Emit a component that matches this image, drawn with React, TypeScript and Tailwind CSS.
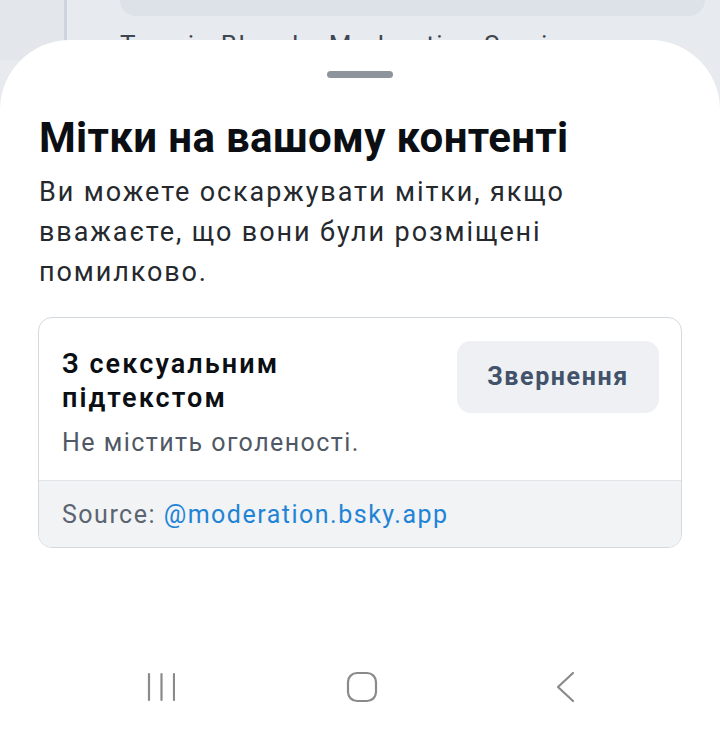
export default function App() {
  return (
    <div
      className="relative h-[730px] w-[720px] overflow-hidden bg-[#e7eaef]"
      style={{ fontFamily: "Roboto, 'Noto Sans', sans-serif" }}
    >
      {/* page behind the sheet */}
      <div className="flex h-[60px]">
        <div className="w-[64px] bg-[#e3e7ec]" />
        <div className="w-[3px] bg-[#cdd4dd]" />
        <div className="flex-1 pl-[53px] pr-[15px]">
          <div className="h-[16px] rounded-b-[16px] bg-[#dde1e8]" />
          <div className="mt-[14px] text-[26px] leading-[30px] tracking-[1.5px] text-[#3f4650]">
            Тег від Bluesky Moderation Service
          </div>
        </div>
      </div>

      {/* bottom sheet */}
      <div className="absolute inset-x-0 top-[40px] bottom-0 flex flex-col rounded-t-[70px] bg-white">
        <div className="mx-auto mt-[31px] h-[7px] w-[66px] rounded-full bg-[#8e949c]" />

        <div className="px-[39px] pt-[35px]">
          <h1 className="text-[42px] font-bold leading-[50px] tracking-[0.35px] text-[#0b0f14]">
            Мітки на вашому контенті
          </h1>
          <p className="mt-[9px] text-[27px] leading-[40px] tracking-[1.9px] text-[#25292e]">
            Ви можете оскаржувати мітки, якщо вважаєте, що вони були розміщені помилково.
          </p>
        </div>

        <div className="mx-[38px] mt-[25px] overflow-hidden rounded-[14px] border border-[#d4d9e0]">
          <div className="flex items-start gap-[24px] pt-[23px] pr-[22px] pb-[22px] pl-[23px]">
            <div className="flex-1 pt-[6px]">
              <div className="text-[27px] font-semibold leading-[34px] tracking-[2.1px] text-[#0b0f14]">
                З сексуальним підтекстом
              </div>
              <div className="mt-[13px] text-[25px] leading-[30px] tracking-[1.45px] text-[#4f5864]">
                Не містить оголеності.
              </div>
            </div>
            <button className="h-[72px] w-[202px] shrink-0 rounded-[14px] bg-[#eef0f3] text-[25px] font-bold tracking-[1.6px] text-[#42526a]">
              Звернення
            </button>
          </div>
          <div className="border-t border-[#e1e5ea] bg-[#f1f3f5] px-[23px] pt-[19px] pb-[17px] text-[25px] leading-[30px] tracking-[1.5px]">
            <span className="text-[#5b6470]">Source: </span>
            <span className="text-[#1f84d6]">@moderation.bsky.app</span>
          </div>
        </div>

        {/* system navigation bar */}
        <div className="mt-auto flex h-[86px] items-center pl-[147px]">
          <svg width="28" height="32" viewBox="0 0 28 32" fill="none" stroke="#8a8a8a" strokeWidth="2.2" strokeLinecap="round">
            <path d="M2 3v26M14.5 3v26M27 3v26" />
          </svg>
          <svg className="ml-[171px]" width="32" height="32" viewBox="0 0 32 32" fill="none" stroke="#8a8a8a" strokeWidth="2.2">
            <rect x="2" y="2" width="28" height="28" rx="9" />
          </svg>
          <svg className="ml-[171px]" width="32" height="32" viewBox="0 0 32 32" fill="none" stroke="#8a8a8a" strokeWidth="2.2" strokeLinecap="round" strokeLinejoin="round">
            <path d="M24 2L9 16l15 14" />
          </svg>
        </div>
      </div>
    </div>
  )
}
